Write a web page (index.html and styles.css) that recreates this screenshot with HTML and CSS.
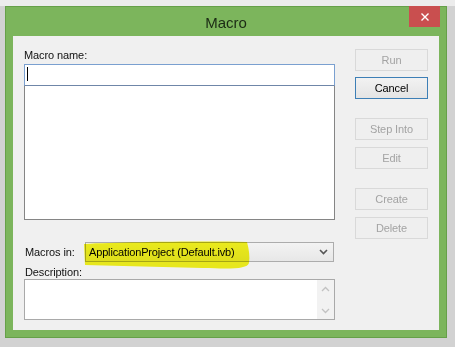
FILE: index.html
```html
<!DOCTYPE html>
<html>
<head>
<meta charset="utf-8">
<link rel="stylesheet" href="styles.css">
</head>
<body>
<div class="window">
  <div class="titlebar">
    <span></span>
    <span class="title">Macro</span>
    <span class="close"><svg width="10" height="10" viewBox="0 0 10 10"><path d="M1.5 1.5L8.5 8.5M8.5 1.5L1.5 8.5" stroke="#fff" stroke-width="1.4" fill="none"/></svg></span>
  </div>
  <div class="client">
    <div class="top">
      <div class="left">
        <div class="lbl">Macro name:</div>
        <div class="name-input"><span class="caret"></span></div>
        <div class="listbox"></div>
      </div>
      <div class="buttons">
        <div class="btn disabled">Run</div>
        <div class="btn default b-cancel">Cancel</div>
        <div class="btn disabled b-group">Step Into</div>
        <div class="btn disabled b-next">Edit</div>
        <div class="btn disabled b-group">Create</div>
        <div class="btn disabled b-next">Delete</div>
      </div>
    </div>
    <div class="macros-row">
      <span class="lbl row-lbl">Macros in:</span>
      <div class="select">
        <svg class="marker" width="172" height="30" viewBox="0 0 172 30"><path d="M1 3 C40 1 120 0 164 1 C166 8 167 16 166 22 C164 28 150 28 120 27 C80 26 40 25 2 24 Z" fill="#f6f61e"/></svg>
        <span class="sel-text">ApplicationProject (Default.ivb)</span>
        <svg class="chev" width="9" height="6" viewBox="0 0 9 6"><path d="M1 1L4.5 4.5L8 1" stroke="#555" stroke-width="1.6" fill="none"/></svg>
      </div>
    </div>
    <div class="lbl desc-lbl">Description:</div>
    <div class="desc">
      <div class="scroll">
        <svg width="9" height="6" viewBox="0 0 9 6"><path d="M1 5L4.5 1.5L8 5" stroke="#c2c2c2" stroke-width="1.3" fill="none"/></svg>
        <svg width="9" height="6" viewBox="0 0 9 6"><path d="M1 1L4.5 4.5L8 1" stroke="#c2c2c2" stroke-width="1.3" fill="none"/></svg>
      </div>
    </div>
  </div>
</div>
</body>
</html>
```

FILE: styles.css
```css
* { box-sizing: border-box; }
html, body { margin: 0; }
body {
  width: 455px;
  height: 347px;
  overflow: hidden;
  background: linear-gradient(#ececec 0, #ececec 6px, #d2d2d2 6px);
  font-family: "Liberation Sans", Arial, sans-serif;
  font-size: 11px;
  letter-spacing: -0.1px;
  color: #000;
  padding-top: 6px;
  padding-left: 5px;
}
.window {
  width: 442px;
  height: 332px;
  background: #7cb55c;
  border: 1px solid #66a049;
  padding: 0 7px 7px 7px;
  display: flex;
  flex-direction: column;
}
.titlebar {
  height: 29px;
  flex-shrink: 0;
  display: grid;
  grid-template-columns: 1fr auto 1fr;
  align-items: center;
}
.title {
  font-size: 15px;
  letter-spacing: 0;
  color: #1b2a14;
  padding-top: 1px;
}
.close {
  justify-self: end;
  align-self: start;
  margin-top: -1px;
  margin-right: -1px;
  width: 31px;
  height: 21px;
  background: #c94f4f;
  display: flex;
  align-items: center;
  justify-content: center;
}
.client {
  flex: 1;
  background: #f0f0f0;
  padding: 12px 11px 0 11px;
  overflow: hidden;
}
.top {
  display: flex;
  gap: 20px;
}
.left {
  width: 311px;
  display: flex;
  flex-direction: column;
}
.lbl {
  line-height: 14px;
  height: 14px;
  color: #111;
}
.left .lbl { margin-bottom: 2px; }
.name-input {
  height: 22px;
  background: #fff;
  border: 1px solid #7aa0d0;
  border-bottom-color: #6f86a8;
  padding: 2px 0 0 2px;
  position: relative;
  z-index: 1;
}
.caret {
  display: block;
  width: 1px;
  height: 14px;
  background: #000;
}
.listbox {
  margin-top: -1px;
  height: 135px;
  background: #fff;
  border: 1px solid #858585;
}
.buttons {
  width: 73px;
  margin-top: 1px;
  display: flex;
  flex-direction: column;
}
.btn {
  height: 22px;
  display: flex;
  align-items: center;
  justify-content: center;
  font-size: 11px;
}
.btn.disabled {
  border: 1px solid #d9d9d9;
  background: #efefef;
  color: #a3a3a3;
}
.btn.default {
  border: 1px solid #3d7fb6;
  background: linear-gradient(#f2f2f2, #e4e4e4);
  color: #000;
}
.b-cancel { margin-top: 6px; }
.b-group { margin-top: 19px; }
.b-next { margin-top: 7px; }
.macros-row {
  margin-top: 3px;
  display: flex;
  align-items: center;
  height: 20px;
}
.row-lbl {
  width: 60px;
  margin-left: 1px;
}
.select {
  position: relative;
  width: 249px;
  height: 20px;
  border: 1px solid #acacac;
  background: linear-gradient(#f3f3f3, #e7e7e7);
  display: flex;
  align-items: center;
  padding-left: 3px;
}
.marker {
  position: absolute;
  left: -3px;
  top: -2px;
  mix-blend-mode: multiply;
}
.sel-text {
  position: relative;
  flex: 1;
  letter-spacing: -0.15px;
  color: #000;
}
.chev {
  position: relative;
  margin-right: 5px;
}
.desc-lbl {
  margin-top: 4px;
  height: 13px;
  line-height: 13px;
  margin-left: 1px;
}
.desc {
  width: 311px;
  height: 41px;
  background: #fff;
  border: 1px solid #a9a9a9;
  display: flex;
  justify-content: flex-end;
}
.scroll {
  width: 17px;
  background: #f2f2f2;
  display: flex;
  flex-direction: column;
  justify-content: space-between;
  align-items: center;
  padding: 6px 0 5px;
}
```
